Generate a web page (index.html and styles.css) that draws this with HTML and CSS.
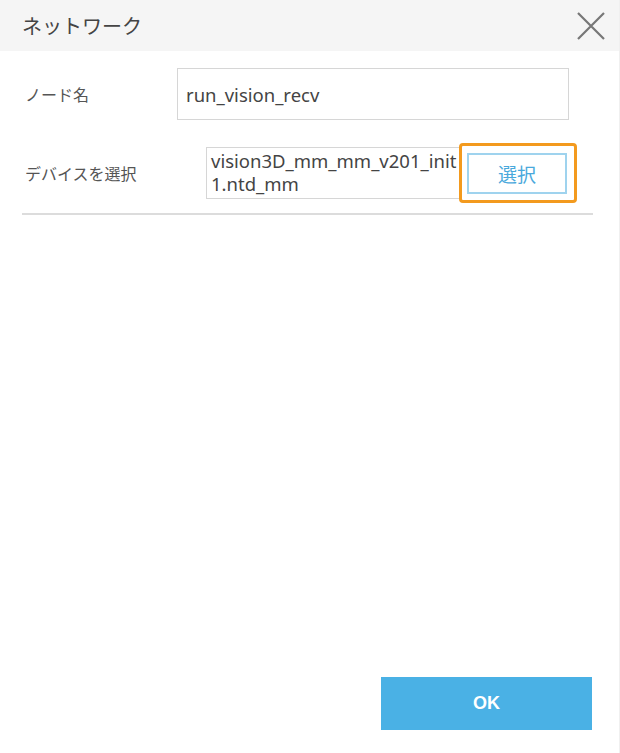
FILE: index.html
```html
<!DOCTYPE html>
<html lang="ja">
<head>
<meta charset="utf-8">
<title>ネットワーク</title>
<link rel="stylesheet" href="styles.css">
</head>
<body>
<div class="dialog">
  <header class="header">
    <h1 class="title">ネットワーク</h1>
    <button class="close" aria-label="閉じる">
      <svg width="28" height="28" viewBox="0 0 28 28"><path d="M1 1 L27 27 M27 1 L1 27" stroke="#777" stroke-width="2.2" fill="none"/></svg>
    </button>
  </header>
  <main class="content">
    <div class="row row-name">
      <label class="label label-name">ノード名</label>
      <div class="input input-name">run_vision_recv</div>
    </div>
    <div class="row row-device">
      <label class="label label-device">デバイスを選択</label>
      <div class="input input-device">vision3D_mm_mm_v201_init<br>1.ntd_mm</div>
      <div class="select-wrap">
        <button class="select-btn">選択</button>
        <span class="highlight"></span>
      </div>
    </div>
    <hr class="divider">
  </main>
  <footer class="footer">
    <button class="ok">OK</button>
  </footer>
</div>
</body>
</html>
```
FILE: styles.css
```css
* { box-sizing: border-box; }
html, body { margin: 0; padding: 0; background: #fff; }
body {
  font-family: "Noto Sans", "Noto Sans CJK JP", sans-serif;
  color: #444;
}
.dialog {
  width: 620px;
  height: 753px;
  display: flex;
  flex-direction: column;
  border-right: 1px solid #f0f0f0;
}
.header {
  height: 51px;
  background: #f5f5f5;
  display: flex;
  align-items: center;
  justify-content: space-between;
  padding: 0 14px 0 22px;
}
.title {
  margin: 0;
  font-family: "Noto Sans CJK JP", sans-serif;
  font-weight: 400;
  font-size: 20px;
  color: #444;
}
.close {
  border: 0;
  background: none;
  padding: 0;
  width: 28px;
  height: 28px;
  display: flex;
}
.content {
  flex: 1;
  padding: 17px 0 0 22px;
}
.row {
  display: flex;
  align-items: center;
}
.label {
  font-family: "Noto Sans CJK JP", sans-serif;
  font-size: 16px;
  color: #555;
  padding-left: 3px;
}
.label-name { width: 155px; }
.label-device { width: 184px; }
.input {
  border: 1px solid #d6d6d6;
  font-size: 18.5px;
  color: #444;
  white-space: nowrap;
}
.input-name {
  width: 392px;
  height: 52px;
  padding: 0 8px;
  display: flex;
  align-items: center;
}
.row-device { margin-top: 27px; }
.input-device {
  width: 256px;
  height: 52px;
  padding: 1px 4px;
  line-height: 23px;
  overflow: hidden;
}
.select-wrap {
  position: relative;
  margin-left: 5px;
}
.select-btn {
  display: block;
  width: 100px;
  height: 41px;
  border: 2px solid #9fd3ee;
  background: #fff;
  color: #4aa9dc;
  font-family: "Noto Sans CJK JP", sans-serif;
  font-size: 19px;
  padding: 0;
}
.highlight {
  position: absolute;
  left: -8px;
  top: -10px;
  width: 118px;
  height: 60px;
  border: 3px solid #f39a1e;
  border-radius: 4px;
}
.divider {
  margin: 14px 0 0 0;
  width: 571px;
  border: 0;
  border-top: 2px solid #dcdcdc;
}
.footer {
  display: flex;
  justify-content: flex-end;
  padding: 0 27px 23px 0;
}
.ok {
  width: 211px;
  height: 53px;
  border: 0;
  background: #4ab1e5;
  color: #fff;
  font-family: "Liberation Sans", sans-serif;
  font-weight: 700;
  font-size: 18px;
}
```
